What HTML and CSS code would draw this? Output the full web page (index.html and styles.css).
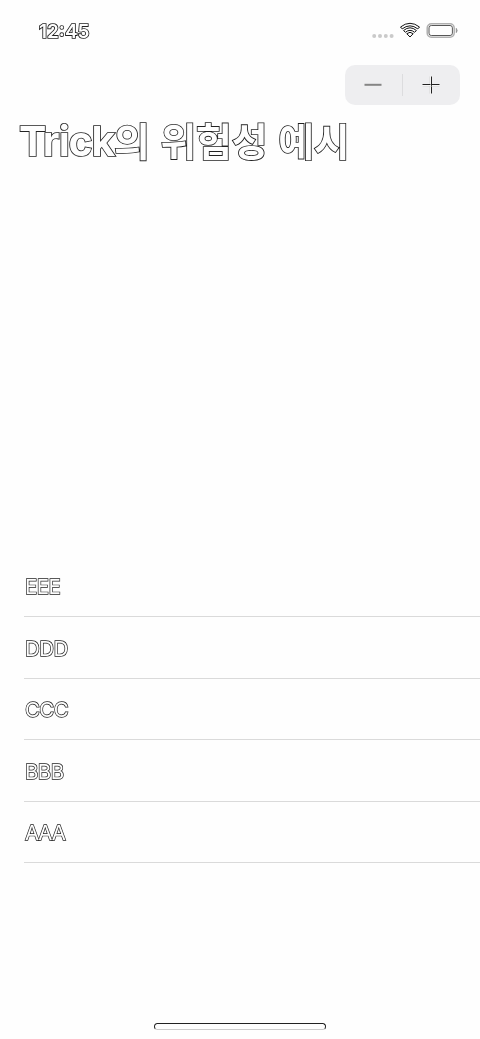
FILE: index.html
```html
<!DOCTYPE html>
<html lang="ko">
<head>
<meta charset="utf-8">
<title>Trick의 위험성 예시</title>
<link rel="stylesheet" href="styles.css">
</head>
<body>
<div class="screen">
  <header class="status">
    <span class="time outlined">12:45</span>
    <div class="indicators">
      <svg class="dots" width="22" height="6" viewBox="0 0 22 6" fill="#cacaca"><circle cx="2.2" cy="3" r="2"/><circle cx="8" cy="3" r="2"/><circle cx="13.8" cy="3" r="2"/><circle cx="19.6" cy="3" r="2"/></svg>
      <svg class="wifi" width="22" height="18" viewBox="0 0 22 18" fill="#fff" stroke="#111" stroke-width="1" stroke-linejoin="round"><path d="M1.5 5Q11-2.4 20.5 5L18.8 6.9Q11 .8 3.2 6.9Z"/><path d="M4.6 8.5Q11 3.1 17.4 8.5L15.6 10.3Q11 6.4 6.4 10.3Z"/><path d="M7.8 11.7Q11 8.9 14.2 11.7L11 15Z"/></svg>
      <svg class="battery" width="33" height="17" viewBox="0 0 33 17" fill="none"><rect x="1.2" y="1.7" width="27" height="13.6" rx="4.2" stroke="#b0b0b0" stroke-width="1.5"/><rect x="3" y="3.5" width="23.4" height="10" rx="2.3" stroke="#444" stroke-width=".9"/><path d="M30.3 6.4Q32 8.5 30.3 10.6Z" fill="#bbb" stroke="#888" stroke-width=".8"/></svg>
    </div>
  </header>
  <div class="toolbar">
    <div class="stepper">
      <button class="step" aria-label="minus"><svg width="20" height="20" viewBox="0 0 20 20"><path d="M1.5 9.8H18.5" stroke="#858585" stroke-width="2"/></svg></button>
      <span class="divider"></span>
      <button class="step plus" aria-label="plus"><svg width="20" height="20" viewBox="0 0 20 20"><path d="M1.5 10.5H18.5M9.5 1.5V18.5" stroke="#fff" stroke-width="1.4" fill="none"/><path d="M1.5 9.5H9.5M11 9.5H18.5M10.5 1.5V18.5" stroke="#222" stroke-width="1" fill="none"/><path d="M8.8 1.5V9M8.8 11V18.5M1.5 11.2H18.5" stroke="#ccc" stroke-width=".6" fill="none"/></svg></button>
    </div>
  </div>
  <h1 class="title outlined"><span class="latin">Trick</span><span class="hangul">의 위험성 예시</span></h1>
  <ul class="list">
    <li class="row outlined eee">EEE</li>
    <li class="row outlined ddd">DDD</li>
    <li class="row outlined ccc">CCC</li>
    <li class="row outlined bbb">BBB</li>
    <li class="row outlined aaa">AAA</li>
  </ul>
  <div class="home"></div>
</div>
</body>
</html>
```
FILE: styles.css
```css
* { box-sizing: border-box; }
body { margin: 0; background: #fefefe; font-family: Inter, "Noto Sans CJK KR", sans-serif; }
.screen { width: 480px; height: 1039px; display: flex; flex-direction: column; overflow: hidden; }
.outlined { color: #fefefe; -webkit-text-stroke: 1.7px #222; paint-order: stroke fill; will-change: transform; }
.status { height: 65px; padding: 18px 21px 0 39px; display: flex; justify-content: space-between; align-items: flex-start; }
.time { font-size: 19px; font-weight: 600; line-height: 27px; letter-spacing: 0; }
.indicators { display: flex; align-items: flex-start; }
.dots { margin: 15px 5px 0 0; }
.wifi { margin: 4px 5px 0 0; }
.battery { margin-top: 4px; }
.toolbar { height: 40px; padding-right: 20px; display: flex; justify-content: flex-end; }
.stepper { width: 115px; height: 40px; border-radius: 10px; background: #eeeef0; display: flex; align-items: center; }
.step { flex: 1; height: 40px; border: 0; padding: 0 1px 0 0; background: none; display: flex; align-items: center; justify-content: center; }
.divider { width: 1px; height: 22px; background: #dcdcde; }
.title { height: 60px; margin: 4px 0 0; padding-left: 19px; display: flex; align-items: baseline; font-size: 41px; line-height: 60px; font-weight: 700; white-space: pre; }
.latin { width: 95px; font-size: 41px; font-weight: 650; letter-spacing: -1.2px; }
.hangul { font-family: "Noto Sans CJK KR", sans-serif; font-size: 39px; letter-spacing: -0.2px; }
.list { list-style: none; margin: 386px 0 0; padding: 0 0 0 24px; }
.row { height: 61.5px; padding-left: 1px; border-bottom: 1px solid #dadada; font-size: 20.5px; line-height: 63px; letter-spacing: -0.6px; -webkit-text-stroke-width: 1.4px; }
.aaa { letter-spacing: -1.1px; }
.home { width: 172px; height: 7px; margin: auto auto 9.5px 154px; border: 1px solid #222; border-bottom-color: #ccc; border-radius: 4px; }
```
